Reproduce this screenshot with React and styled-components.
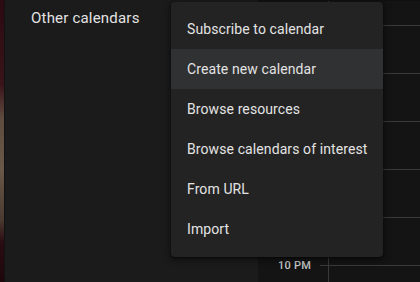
import React from "react";
import styled, { createGlobalStyle } from "styled-components";

const Global = createGlobalStyle`
  html, body { margin: 0; padding: 0; background: #141414; }
  body { font-family: Roboto, "Liberation Sans", Arial, sans-serif; overflow: hidden; }
  #root { width: 420px; height: 282px; }
`;

const Page = styled.div`
  position: relative;
  display: flex;
  width: 420px;
  height: 282px;
  overflow: hidden;
`;

const Wallpaper = styled.div`
  width: 4px;
  flex: none;
  background: linear-gradient(
    180deg,
    #2c0a12 0%,
    #3a141a 30%,
    #5e4c3e 42%,
    #6a5848 60%,
    #4a3a30 78%,
    #2a0c12 86%,
    #1e080c 100%
  );
  border-right: 1px solid #121212;
`;

const Sidebar = styled.aside`
  width: 253px;
  flex: none;
  background: #1b1b1b;
  padding-left: 26px;
  box-sizing: border-box;
`;

const SectionHeader = styled.div`
  height: 36px;
  display: flex;
  align-items: center;
  color: #e3e3e3;
  font-size: 15px;
  font-weight: 400;
  letter-spacing: 0.2px;
`;

const Calendar = styled.main`
  flex: 1;
  display: flex;
  background: #141414;
  border-top: 1px solid #101010;
  box-sizing: border-box;
`;

const Gutter = styled.div`
  width: 70px;
  flex: none;
  display: flex;
  flex-direction: column;
`;

const GutterRow = styled.div`
  height: 48px;
  flex: none;
  display: flex;
  align-items: center;
  justify-content: flex-end;
  gap: 9px;
`;

const HourLabel = styled.span`
  color: #c4c7c5;
  font-size: 11px;
  font-weight: 500;
  letter-spacing: 0.2px;
`;

const Tick = styled.span`
  width: 8px;
  height: 1px;
  background: #3a3a3a;
`;

const Grid = styled.div`
  flex: 1;
  display: flex;
  flex-direction: column;
  border-left: 1px solid #3a3a3a;
`;

const GridRow = styled.div`
  height: ${(p) => p.$h}px;
  flex: none;
  box-sizing: border-box;
  border-bottom: 1px solid #3a3a3a;
`;

const Menu = styled.ul`
  position: absolute;
  left: 171px;
  top: 2px;
  width: 212px;
  margin: 0;
  padding: 7px 0 8px;
  list-style: none;
  background: #232323;
  border-radius: 4px;
  box-shadow: 0 2px 6px 2px rgba(0, 0, 0, 0.35), 0 1px 2px rgba(0, 0, 0, 0.5);
`;

const MenuItem = styled.li`
  height: 40px;
  display: flex;
  align-items: center;
  padding-left: 16px;
  color: #e3e3e3;
  font-size: 14px;
  letter-spacing: 0.1px;
  background: ${(p) => (p.$active ? "#303132" : "transparent")};
`;

// Earlier hour labels sit under the open menu; only the last one is visible.
const hours = [null, null, null, null, null, "10 PM"];
const items = [
  "Subscribe to calendar",
  "Create new calendar",
  "Browse resources",
  "Browse calendars of interest",
  "From URL",
  "Import",
];

export default function App() {
  return (
    <>
      <Global />
      <Page>
        <Wallpaper />
        <Sidebar>
          <SectionHeader>Other calendars</SectionHeader>
        </Sidebar>
        <Calendar>
          <Gutter>
            {hours.map((h, i) => (
              <GutterRow key={i}>
                {h && <HourLabel>{h}</HourLabel>}
                <Tick />
              </GutterRow>
            ))}
          </Gutter>
          <Grid>
            <GridRow $h={25} />
            {hours.slice(1).map((h, i) => (
              <GridRow key={i} $h={48} />
            ))}
          </Grid>
        </Calendar>
        <Menu>
          {items.map((it, i) => (
            <MenuItem key={it} $active={i === 1}>
              {it}
            </MenuItem>
          ))}
        </Menu>
      </Page>
    </>
  );
}
